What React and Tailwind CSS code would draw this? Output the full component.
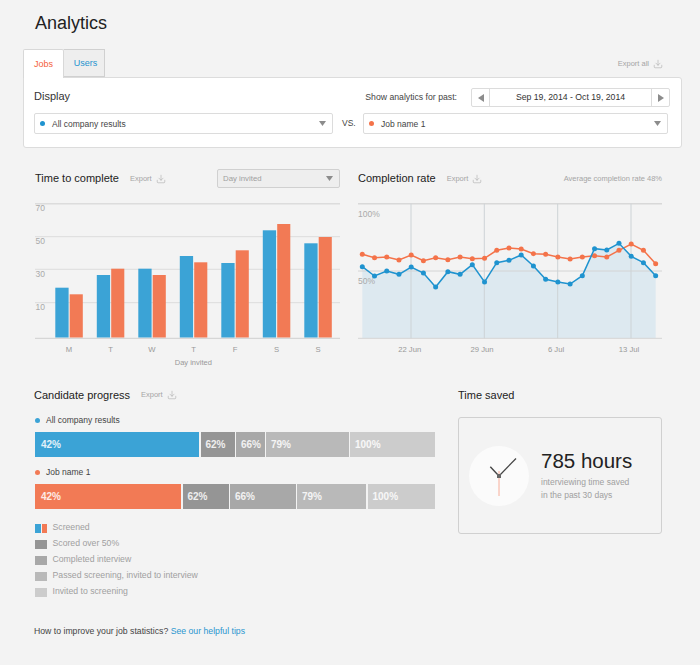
import { Download } from "lucide-react";

const BLUE = "#1f93cf";
const ORANGE = "#f4734a";

// bar tops as read off the chart, relative to the svg
const blueTops = [92.7, 80, 73.7, 61, 68, 35.3, 48.3];
const orangeTops = [99.3, 73.7, 80, 67.3, 55.3, 29, 42];
const days = ["M", "T", "W", "T", "F", "S", "S"];

const blueLine = [320, 348, 333, 343, 321, 339, 381, 335, 343, 314, 366, 308, 301, 285, 318, 358, 366, 372, 347, 266, 270, 250, 289, 308, 347];
const orangeLine = [283, 293, 291, 300, 285, 302, 293, 299, 291, 296, 295, 271, 264, 267, 281, 283, 291, 297, 291, 287, 291, 271, 252, 271, 311];

const toPoints = (ys) =>
  ys.map((y, i) => [362.3 - 358 + (i * 36.67) / 3, 160 + y / 3 - 195]);

const Caret = ({ className = "" }) => (
  <svg width="7" height="5" viewBox="0 0 7 5" className={className}>
    <polygon points="0,0 7,0 3.5,5" fill="#8c8c8c" />
  </svg>
);

const ExportLink = ({ label = "Export" }) => (
  <span className="flex items-center gap-[4px] text-[7.5px] leading-[10px] text-[#a5a5a5]">
    {label}
    <Download size={10} strokeWidth={1.3} color="#a5a5a5" />
  </span>
);

const SelectBox = ({ dot, label, className = "" }) => (
  <div className={`flex h-[21px] items-center rounded-[2px] border border-[#dcdcdc] bg-white pl-[5px] pr-[6px] ${className}`}>
    <span className="h-[5px] w-[5px] rounded-full" style={{ background: dot }} />
    <span className="ml-[7px] flex-1 pt-px text-[8.5px] text-[#444]">{label}</span>
    <Caret />
  </div>
);

function BarChart() {
  return (
    <svg width="305" height="175" className="block font-['Liberation_Sans',sans-serif]">
      <line x1="0" x2="305" y1="8.7" y2="8.7" stroke="#dcdcdc" strokeWidth="1.5" />
      {[41.7, 74.3, 107.7].map((y) => (
        <line key={y} x1="0" x2="305" y1={y} y2={y} stroke="#dcdcdc" strokeWidth="1" />
      ))}
      <line x1="0" x2="305" y1="143.3" y2="143.3" stroke="#cfcfcf" strokeWidth="1" />
      {[["70", 16], ["50", 49], ["30", 81.5], ["10", 114.5]].map(([t, y]) => (
        <text key={t} x="0.5" y={y} fontSize="8.5" fill="#aaa">{t}</text>
      ))}
      {days.map((d, i) => {
        const x = 20.3 + i * 41.5;
        return (
          <g key={i}>
            <rect x={x} y={blueTops[i]} width="13.3" height={142.5 - blueTops[i]} fill="#3ba3d6" />
            <rect x={x + 14.4} y={orangeTops[i]} width="13.1" height={142.5 - orangeTops[i]} fill="#f27a55" />
            <text x={x + 13.7} y="157" fontSize="7.7" fill="#999" textAnchor="middle">{d}</text>
          </g>
        );
      })}
      <text x="158.3" y="170" fontSize="7.5" fill="#999" textAnchor="middle">Day invited</text>
    </svg>
  );
}

function LineChart() {
  const blue = toPoints(blueLine);
  const orange = toPoints(orangeLine);
  const area = `${blue[0][0]},143 ${blue.map((p) => p.join(",")).join(" ")} ${blue[24][0]},143`;
  return (
    <svg width="304" height="175" className="block font-['Liberation_Sans',sans-serif]">
      <polygon points={area} fill="#dde9f0" />
      <line x1="0" x2="304" y1="8.7" y2="8.7" stroke="#d8d8d8" strokeWidth="1.5" />
      {[76, 143.3].map((y) => (
        <line key={y} x1="0" x2="304" y1={y} y2={y} stroke="#d4d4d4" strokeWidth="1" />
      ))}
      {[53, 126.3, 199.7, 273].map((x) => (
        <line key={x} x1={x} x2={x} y1="8.7" y2="143.3" stroke="#cdd3d6" strokeWidth="1" />
      ))}
      <text x="0" y="22" fontSize="8.5" fill="#aaa">100%</text>
      <text x="0" y="88.5" fontSize="8.5" fill="#aaa">50%</text>
      {[["22 Jun", 51.7], ["29 Jun", 124], ["6 Jul", 198], ["13 Jul", 271]].map(([t, x]) => (
        <text key={t} x={x} y="157" fontSize="7.7" fill="#999" textAnchor="middle">{t}</text>
      ))}
      <polyline points={orange.map((p) => p.join(",")).join(" ")} fill="none" stroke={ORANGE} strokeWidth="1.5" />
      {orange.map(([x, y], i) => <circle key={i} cx={x} cy={y} r="2.5" fill={ORANGE} />)}
      <polyline points={blue.map((p) => p.join(",")).join(" ")} fill="none" stroke={BLUE} strokeWidth="1.5" />
      {blue.map(([x, y], i) => <circle key={i} cx={x} cy={y} r="2.5" fill={BLUE} />)}
    </svg>
  );
}

const grays = ["bg-[#959595]", "bg-[#a8a8a8]", "bg-[#b9b9b9]", "bg-[#cccccc]"];
const labels = ["62%", "66%", "79%", "100%"];

function ProgressBar({ first, firstWidth, widths }) {
  return (
    <div className="flex h-[25px] gap-[1.5px] text-[10px] font-bold text-white/85">
      <div className={`flex items-center pl-[6px] ${first}`} style={{ width: firstWidth }}>42%</div>
      {widths.map((w, i) => (
        <div key={i} className={`flex items-center pl-[5px] ${grays[i]}`} style={{ width: w }}>{labels[i]}</div>
      ))}
    </div>
  );
}

const LegendRow = ({ label, children }) => (
  <div className="flex h-[16px] items-center gap-[5.5px] text-[8.7px] text-[#a0a0a0]">
    <span className="flex h-[9px] w-[12px] gap-px">{children}</span>
    {label}
  </div>
);

function Clock() {
  return (
    <svg width="60" height="60" viewBox="-30 -30 60 60" className="shrink-0">
      <circle r="30" fill="#fbfbfb" />
      <line x1="0" y1="-5" x2="0" y2="20" stroke="#f7a58e" strokeWidth="0.9" />
      <line x1="0" y1="0" x2="17" y2="-17.5" stroke="#444" strokeWidth="1.2" />
      <line x1="0" y1="0" x2="-8.7" y2="-9.3" stroke="#444" strokeWidth="1.4" />
      <rect x="-2" y="-2" width="4" height="4" fill="#666" />
    </svg>
  );
}

export default function App() {
  return (
    <div className="h-[665px] w-[700px] overflow-hidden bg-[#f3f3f3] font-['Liberation_Sans',Arial,sans-serif] text-[#333]">
      <h1 className="h-[49px] pl-[35px] pt-[14px] text-[18px] font-normal leading-[18px] text-[#222]">Analytics</h1>

      <div className="ml-[23px] w-[659px]">
        <div className="flex h-[29px] items-stretch">
          <div className="relative z-10 flex h-[29px] w-[41px] items-center justify-center rounded-t-[2px] border border-b-0 border-[#d8d8d8] bg-white pt-[2px] text-[9px] text-[#f4603c]">Jobs</div>
          <div className="flex h-[28px] w-[41px] items-center justify-center border border-l-0 border-[#d0d0d0] bg-[#eeeeee] pl-[3px] pt-[2px] text-[9px] text-[#1f93cf]">Users</div>
          <div className="ml-auto mr-[19px] pt-[10px]"><ExportLink label="Export all" /></div>
        </div>
        <div className="-mt-px h-[71px] rounded-b-[3px] rounded-tr-[3px] border border-[#dcdcdc] bg-white pl-[10px] pr-[11px] pt-[10px]">
          <div className="flex h-[19px] items-center">
            <span className="flex-1 pb-[2px] text-[11px] text-[#333]">Display</span>
            <span className="text-[8.7px] text-[#444]">Show analytics for past:</span>
            <div className="ml-[14px] flex h-[19px] w-[199px] items-stretch rounded-[2px] border border-[#dcdcdc] text-[8.7px] text-[#333]">
              <span className="flex w-[18px] items-center justify-center border-r border-[#dcdcdc]">
                <span className="h-0 w-0 border-y-[4px] border-r-[6px] border-y-transparent border-r-[#8c8c8c]" />
              </span>
              <span className="flex flex-1 items-center justify-center">Sep 19, 2014 - Oct 19, 2014</span>
              <span className="flex w-[18px] items-center justify-center border-l border-[#dcdcdc]">
                <span className="h-0 w-0 border-y-[4px] border-l-[6px] border-y-transparent border-l-[#8c8c8c]" />
              </span>
            </div>
          </div>
          <div className="mt-[6px] flex items-center">
            <SelectBox dot={BLUE} label="All company results" className="w-[299px]" />
            <span className="w-[30px] pl-[9px] text-[8.5px] text-[#444]">VS.</span>
            <SelectBox dot={ORANGE} label="Job name 1" className="w-[305px]" />
          </div>
        </div>
      </div>

      <div className="ml-[35px] mt-[21px] flex gap-[18px]">
        <section className="w-[305px]">
          <div className="flex h-[19px] items-center">
            <h2 className="text-[11px] font-normal text-[#222]">Time to complete</h2>
            <span className="ml-[11px]"><ExportLink /></span>
            <div className="ml-auto flex h-[19px] w-[123px] items-center justify-between rounded-[2px] border border-[#d0d0d0] bg-[#eeeeee] pl-[5px] pr-[6px] text-[7.8px] text-[#a0a0a0]">
              Day invited
              <Caret />
            </div>
          </div>
          <div className="mt-[7px]"><BarChart /></div>
        </section>
        <section className="w-[304px]">
          <div className="flex h-[19px] items-center">
            <h2 className="text-[11px] font-normal text-[#222]">Completion rate</h2>
            <span className="ml-[11px]"><ExportLink /></span>
            <span className="ml-auto text-[7.5px] text-[#a5a5a5]">Average completion rate 48%</span>
          </div>
          <div className="mt-[7px]"><LineChart /></div>
        </section>
      </div>

      <div className="ml-[35px] mt-[17px] flex gap-[23px]">
        <section className="w-[400px]">
          <div className="flex h-[16px] items-center">
            <h2 className="-ml-px text-[11px] font-normal text-[#222]">Candidate progress</h2>
            <span className="ml-[11px]"><ExportLink /></span>
          </div>
          <div className="mt-[9px] flex h-[16px] items-center gap-[6px] text-[8.5px] text-[#444]">
            <span className="h-[5px] w-[5px] rounded-full bg-[#3ba3d6]" />
            All company results
          </div>
          <div className="mt-[4px]">
            <ProgressBar first="bg-[#3ba3d6]" firstWidth={164} widths={[34, 28.5, 82.5, 85]} />
          </div>
          <div className="mt-[6px] flex h-[19px] items-center gap-[6px] text-[8.5px] text-[#444]">
            <span className="h-[5px] w-[5px] rounded-full bg-[#f27a55]" />
            Job name 1
          </div>
          <div className="mt-[2px]">
            <ProgressBar first="bg-[#f27a55]" firstWidth={146} widths={[46, 65.5, 69, 67]} />
          </div>
          <div className="mt-[11px]">
            <LegendRow label="Screened">
              <span className="flex-1 bg-[#3ba3d6]" />
              <span className="flex-1 bg-[#f27a55]" />
            </LegendRow>
            <LegendRow label="Scored over 50%"><span className="flex-1 bg-[#959595]" /></LegendRow>
            <LegendRow label="Completed interview"><span className="flex-1 bg-[#a8a8a8]" /></LegendRow>
            <LegendRow label="Passed screening, invited to interview"><span className="flex-1 bg-[#b9b9b9]" /></LegendRow>
            <LegendRow label="Invited to screening"><span className="flex-1 bg-[#cccccc]" /></LegendRow>
          </div>
          <p className="-ml-px mt-[23px] text-[8.7px] leading-[16px] text-[#444]">
            How to improve your job statistics? <a className="text-[#2a96d0]">See our helpful tips</a>
          </p>
        </section>

        <section className="w-[204px]">
          <h2 className="h-[16px] text-[11px] font-normal leading-[16px] text-[#222]">Time saved</h2>
          <div className="mt-[14px] flex h-[117px] items-center rounded-[3px] border border-[#d0d0d0] pl-[10px]">
            <Clock />
            <div className="ml-[12px]">
              <div className="text-[20.5px] leading-[24px] text-[#222]">785 hours</div>
              <div className="mt-[3px] text-[8.5px] leading-[13px] text-[#a0a0a0]">
                interviewing time saved
                <br />
                in the past 30 days
              </div>
            </div>
          </div>
        </section>
      </div>
    </div>
  );
}
